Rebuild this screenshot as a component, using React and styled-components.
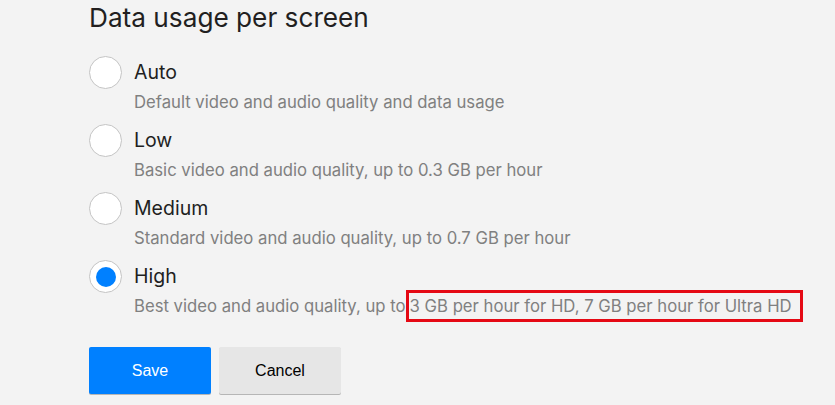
import React, { useState } from "react";
import styled, { createGlobalStyle } from "styled-components";

const Global = createGlobalStyle`
  html, body { margin: 0; padding: 0; background: #f3f3f3; }
  body { font-family: Inter, "Noto Sans", sans-serif; }
`;

const Page = styled.div`
  padding: 0 0 0 89px;
  width: 835px;
  height: 405px;
  box-sizing: border-box;
  overflow: hidden;
`;

const Title = styled.h2`
  margin: 0;
  padding-top: 1px;
  font-size: 26.2px;
  font-weight: 400;
  line-height: 34px;
  color: #221f1f;
`;

const Options = styled.div`
  display: flex;
  flex-direction: column;
  gap: 8px;
  margin-top: 21px;
`;

const Option = styled.label`
  display: grid;
  grid-template-columns: 33px auto;
  column-gap: 12px;
  align-items: center;
  cursor: pointer;
`;

const Radio = styled.span`
  width: 33px;
  height: 33px;
  box-sizing: border-box;
  border-radius: 50%;
  border: 1px solid #c4c4c4;
  background: #fff;
  display: flex;
  align-items: center;
  justify-content: center;
  &::after {
    content: "";
    width: 20px;
    height: 20px;
    border-radius: 50%;
    background: #0080ff;
    display: ${(p) => (p.$checked ? "block" : "none")};
  }
`;

const Label = styled.span`
  font-size: 19.5px;
  line-height: 33px;
  color: #221f1f;
`;

const Desc = styled.span`
  grid-column: 2;
  font-size: 16.7px;
  line-height: 27px;
  color: #808080;
`;

const Highlight = styled.span`
  border: 3px solid #e50914;
  padding: 3px 8px 3px 1px;
`;

const Actions = styled.div`
  display: flex;
  gap: 8px;
  margin-top: 27px;
`;

const Button = styled.button`
  width: 122px;
  height: 47px;
  border: none;
  border-radius: 2px;
  font-family: "Liberation Sans", Arial, sans-serif;
  font-size: 16px;
  cursor: pointer;
  background: ${(p) => (p.$primary ? "#0080ff" : "#e6e6e6")};
  color: ${(p) => (p.$primary ? "#fff" : "#000")};
  box-shadow: 0 1px 0 rgba(0, 0, 0, 0.25);
`;

const options = [
  { key: "auto", label: "Auto", desc: "Default video and audio quality and data usage" },
  { key: "low", label: "Low", desc: "Basic video and audio quality, up to 0.3 GB per hour" },
  { key: "medium", label: "Medium", desc: "Standard video and audio quality, up to 0.7 GB per hour" },
  { key: "high", label: "High", desc: null },
];

export default function App() {
  const [sel, setSel] = useState("high");
  return (
    <Page>
      <Global />
      <Title>Data usage per screen</Title>
      <Options>
        {options.map((o) => (
          <Option key={o.key} onClick={() => setSel(o.key)}>
            <Radio $checked={sel === o.key} />
            <Label>{o.label}</Label>
            <Desc>
              {o.desc ?? (
                <>
                  Best video and audio quality, up to
                  <Highlight>3 GB per hour for HD, 7 GB per hour for Ultra HD</Highlight>
                </>
              )}
            </Desc>
          </Option>
        ))}
      </Options>
      <Actions>
        <Button $primary>Save</Button>
        <Button>Cancel</Button>
      </Actions>
    </Page>
  );
}
